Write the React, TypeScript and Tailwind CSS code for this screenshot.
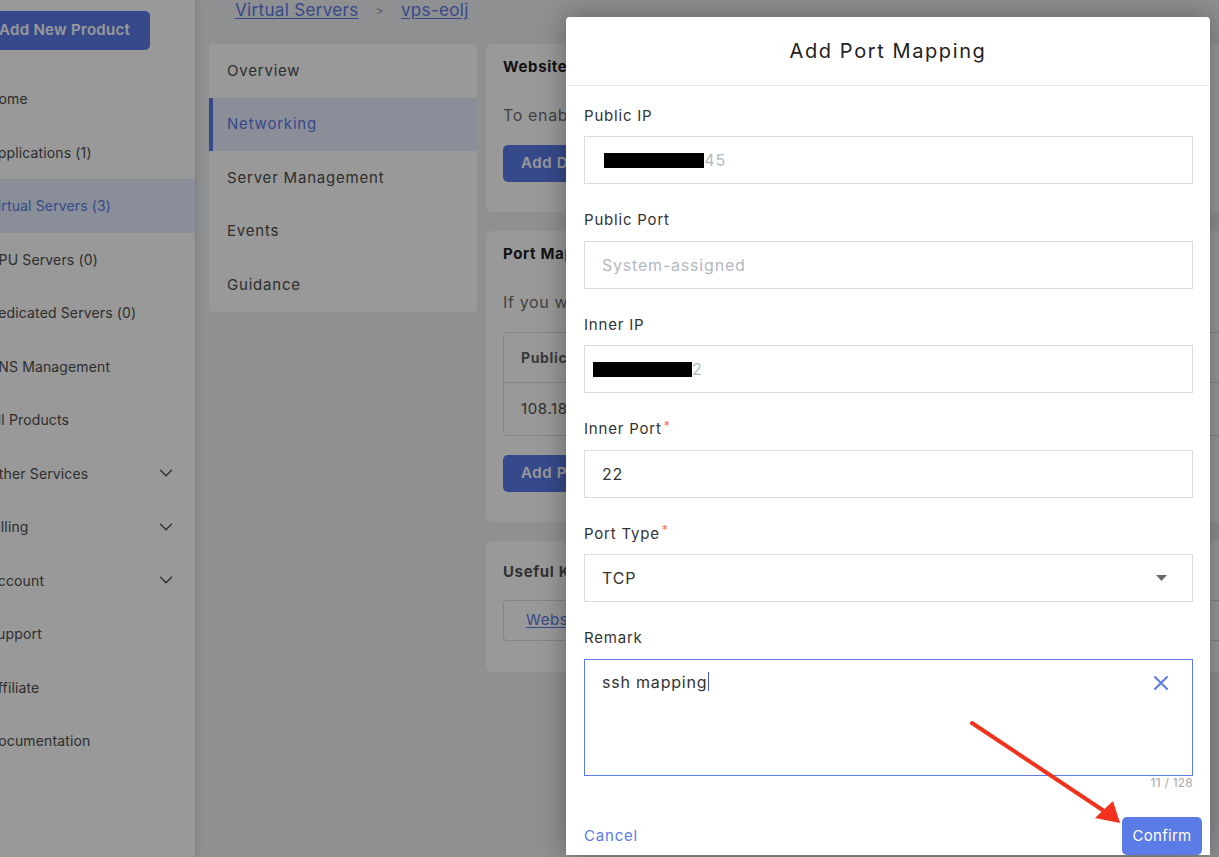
import { ChevronDown } from "lucide-react";

type NavItem = { label: string; active?: boolean; sub?: boolean };

const navItems: NavItem[] = [
  { label: "Home" },
  { label: "Applications (1)" },
  { label: "Virtual Servers (3)", active: true },
  { label: "GPU Servers (0)" },
  { label: "Dedicated Servers (0)" },
  { label: "DNS Management" },
  { label: "All Products" },
  { label: "Other Services", sub: true },
  { label: "Billing", sub: true },
  { label: "Account", sub: true },
  { label: "Support" },
  { label: "Affiliate" },
  { label: "Documentation" },
];

const tabs = ["Overview", "Networking", "Server Management", "Events", "Guidance"];

function Sidebar() {
  return (
    <aside className="relative z-10 w-[196px] shrink-0 overflow-hidden border-r border-[#d9d9d9] bg-white shadow-[2px_0_6px_rgba(0,0,0,0.08)]">
      <div className="-ml-[17px] pt-[11px]">
        <button className="h-[39px] w-[167px] rounded-[5px] bg-[#5a7be8] pl-[16px] text-left text-[15px] font-semibold tracking-[0.02em] text-white">
          Add New Product
        </button>
        <nav className="mt-[22px]">
          {navItems.map((item) => (
            <div
              key={item.label}
              className={
                item.active
                  ? "flex h-[53.5px] items-center justify-between bg-[#e6edfd] pl-[5px] pr-[18px] text-[14px] tracking-[0.01em] text-[#5a7be8]"
                  : "flex h-[53.5px] items-center justify-between pl-[5px] pr-[18px] text-[14px] tracking-[0.01em] text-[#4d4d4d]"
              }
            >
              <span>{item.label}</span>
              {item.sub ? <ChevronDown size={22} strokeWidth={1.6} className="text-[#555]" /> : null}
            </div>
          ))}
        </nav>
      </div>
    </aside>
  );
}

function Card({ children, className }: { children: React.ReactNode; className: string }) {
  return <section className={"rounded-[6px] bg-white pl-[17px] " + className}>{children}</section>;
}

function ServerPage() {
  return (
    <main className="min-w-0 flex-1 px-[13px]">
      <div className="flex h-[22px] items-center gap-[17px] pl-[26px] text-[17px] tracking-[0.02em]">
        <a className="text-[#5a7be8] underline underline-offset-2">Virtual Servers</a>
        <span className="text-[12px] text-[#999]">&gt;</span>
        <a className="text-[#5a7be8] underline underline-offset-2">vps-eolj</a>
      </div>

      <div className="mt-[22px] flex items-start gap-[9px]">
        <div className="w-[268px] shrink-0 overflow-hidden rounded-[4px] bg-white tracking-[0.05em]">
          {tabs.map((tab) =>
            tab === "Networking" ? (
              <div
                key={tab}
                className="flex h-[53.5px] items-center border-l-4 border-[#5a7be8] bg-[#e6edfd] pl-[14px] text-[15px] text-[#5a7be8]"
              >
                {tab}
              </div>
            ) : (
              <div key={tab} className="flex h-[53.5px] items-center pl-[18px] text-[15px] text-[#4d4d4d]">
                {tab}
              </div>
            )
          )}
        </div>

        <div className="flex w-[800px] shrink-0 flex-col gap-[19px] tracking-[0.04em]">
          <Card className="pb-[30px] pt-[13px]">
            <h3 className="h-[20px] text-[15px] font-bold leading-[20px] text-[#1f1f1f]">Website Access</h3>
            <p className="mt-[28px] h-[20px] whitespace-nowrap text-[16px] leading-[20px] text-[#707070]">
              To enable website access, please add a domain and point it to this server.
            </p>
            <button className="mt-[20px] h-[37px] rounded-[5px] bg-[#5a7be8] px-[18px] text-[15px] font-semibold text-white">
              Add Domain
            </button>
          </Card>

          <Card className="pb-[30px] pt-[13px]">
            <h3 className="h-[20px] text-[15px] font-bold leading-[20px] text-[#1f1f1f]">Port Mapping</h3>
            <p className="mt-[28px] h-[20px] whitespace-nowrap text-[16px] leading-[20px] text-[#707070]">
              If you want to access a service on this server from the internet, add a port mapping.
            </p>
            <div className="mt-[20px] mr-[17px] overflow-hidden rounded-[4px] border border-[#dedede]">
              <div className="flex h-[50px] items-center border-b border-[#dedede] text-[14px] font-bold text-[#606060]">
                <span className="w-[160px] pl-[17px]">Public IP</span>
                <span className="w-[140px]">Public Port</span>
                <span className="w-[160px]">Inner IP</span>
                <span className="w-[120px]">Inner Port</span>
                <span>Remark</span>
              </div>
              <div className="flex h-[52px] items-center text-[15px] text-[#4d4d4d]">
                <span className="w-[160px] pl-[17px]">108.187.10.245</span>
                <span className="w-[140px]">20022</span>
                <span className="w-[160px]">10.0.0.2</span>
                <span className="w-[120px]">22</span>
                <span>-</span>
              </div>
            </div>
            <button className="mt-[19px] h-[37px] rounded-[5px] bg-[#5a7be8] px-[18px] text-[15px] font-semibold text-white">
              Add Port Mapping
            </button>
          </Card>

          <Card className="pb-[31px] pt-[21px]">
            <h3 className="h-[20px] text-[15px] font-bold leading-[20px] text-[#555]">Useful Knowledge</h3>
            <div className="mt-[18px] mr-[17px] flex h-[41px] items-center gap-[40px] rounded-[4px] border border-[#dedede] pl-[22px] text-[15px]">
              <a className="text-[#5a7be8] underline underline-offset-2">Website access guide</a>
              <a className="text-[#5a7be8] underline underline-offset-2">Port mapping guide</a>
            </div>
          </Card>
        </div>
      </div>
    </main>
  );
}

function Field({
  label,
  required,
  children,
}: {
  label: string;
  required?: boolean;
  children: React.ReactNode;
}) {
  return (
    <div className="mb-[25.5px]">
      <div className="flex h-[21px] items-center pt-[1px] text-[15px] text-[#333]">
        {label}
        {required ? <span className="ml-[2px] -translate-y-[4px] text-[12px] text-[#f56c6c]">*</span> : null}
      </div>
      <div className="mt-[10px]">{children}</div>
    </div>
  );
}

function Redacted({ width, shift }: { width: number; shift: string }) {
  return <span className={"inline-block h-[15px] bg-black align-middle " + shift} style={{ width }} />;
}

function PortMappingDialog() {
  return (
    <div className="absolute inset-0 z-20 bg-black/40">
      <div className="flex justify-end pr-[9px] pt-[17px]">
        <div className="w-[644px] rounded-t-[4px] bg-white tracking-[0.05em] shadow-[0_0_28px_rgba(0,0,0,0.35)]">
          <div className="flex h-[69px] items-center justify-center border-b border-[#e8e8e8] text-[20px] tracking-[0.08em] text-[#222]">
            Add Port Mapping
          </div>

          <div className="pl-[18px] pr-[17px] pt-[19px]">
            <Field label="Public IP">
              <div className="flex h-[48px] items-center border border-[#dcdcdc] pl-[19px] text-[16px] text-[#b4b8c2]">
                <span>1</span>
                <Redacted width={100} shift="-ml-[7px]" />
                <span>45</span>
              </div>
            </Field>
            <Field label="Public Port">
              <div className="flex h-[48px] items-center border border-[#dcdcdc] pl-[17px] text-[16px] text-[#b4b8c2]">
                System-assigned
              </div>
            </Field>
            <Field label="Inner IP">
              <div className="flex h-[48px] items-center border border-[#dcdcdc] pl-[8px] text-[16px] text-[#b4b8c2]">
                <Redacted width={99} shift="" />
                <span>2</span>
              </div>
            </Field>
            <Field label="Inner Port" required>
              <div className="flex h-[48px] items-center border border-[#dcdcdc] pl-[17px] text-[16px] text-[#333]">
                22
              </div>
            </Field>
            <Field label="Port Type" required>
              <div className="flex h-[48px] items-center justify-between border border-[#dcdcdc] pl-[17px] pr-[25px] text-[16px] text-[#333]">
                TCP
                <svg width="11" height="6" viewBox="0 0 11 6">
                  <path d="M0 0h11L5.5 6z" fill="#6b6b6b" />
                </svg>
              </div>
            </Field>

            <div className="flex h-[21px] items-center pt-[1px] text-[15px] text-[#333]">Remark</div>
            <div className="mt-[10px] flex h-[117px] items-start justify-between border border-[#5a7be8] pl-[17px] pr-[23px] pt-[10px]">
              <div className="flex items-center text-[16px] text-[#333]">
                ssh mapping
                <span className="ml-[1px] inline-block h-[19px] w-px bg-[#3d5bd0]" />
              </div>
              <svg width="16" height="16" viewBox="0 0 16 16" className="mt-[5px]">
                <path d="M2 2l12 12M14 2L2 14" stroke="#5a7be8" strokeWidth="2" strokeLinecap="round" />
              </svg>
            </div>
            <div className="h-[14px] text-right text-[12px] leading-[14px] tracking-[0.02em] text-[#a8a8a8]">11 / 128</div>
          </div>

          <div className="mt-[27.5px] flex items-center justify-between pl-[18px] pr-[8px]">
            <button className="text-[15px] text-[#5a7be8]">Cancel</button>
            <button className="h-[38px] w-[80px] rounded-[5px] bg-[#5b7be6] text-[15px] tracking-[0.02em] text-white">
              Confirm
            </button>
          </div>
        </div>
      </div>

      {/* pointer drawn on top of the dialog, aimed at the Confirm button */}
      <svg className="pointer-events-none absolute inset-0" width="1219" height="857" viewBox="0 0 1219 857">
        <line x1="972" y1="723" x2="1104" y2="811" stroke="#f2321c" strokeWidth="4" strokeLinecap="round" />
        <path d="M1095 818L1113 801L1120 823Z" fill="#f2321c" />
      </svg>
    </div>
  );
}

export default function App() {
  return (
    <div className="relative flex h-[857px] w-[1219px] overflow-hidden bg-[#eef0f3] font-['Inter',sans-serif]">
      <Sidebar />
      <ServerPage />
      <PortMappingDialog />
    </div>
  );
}
